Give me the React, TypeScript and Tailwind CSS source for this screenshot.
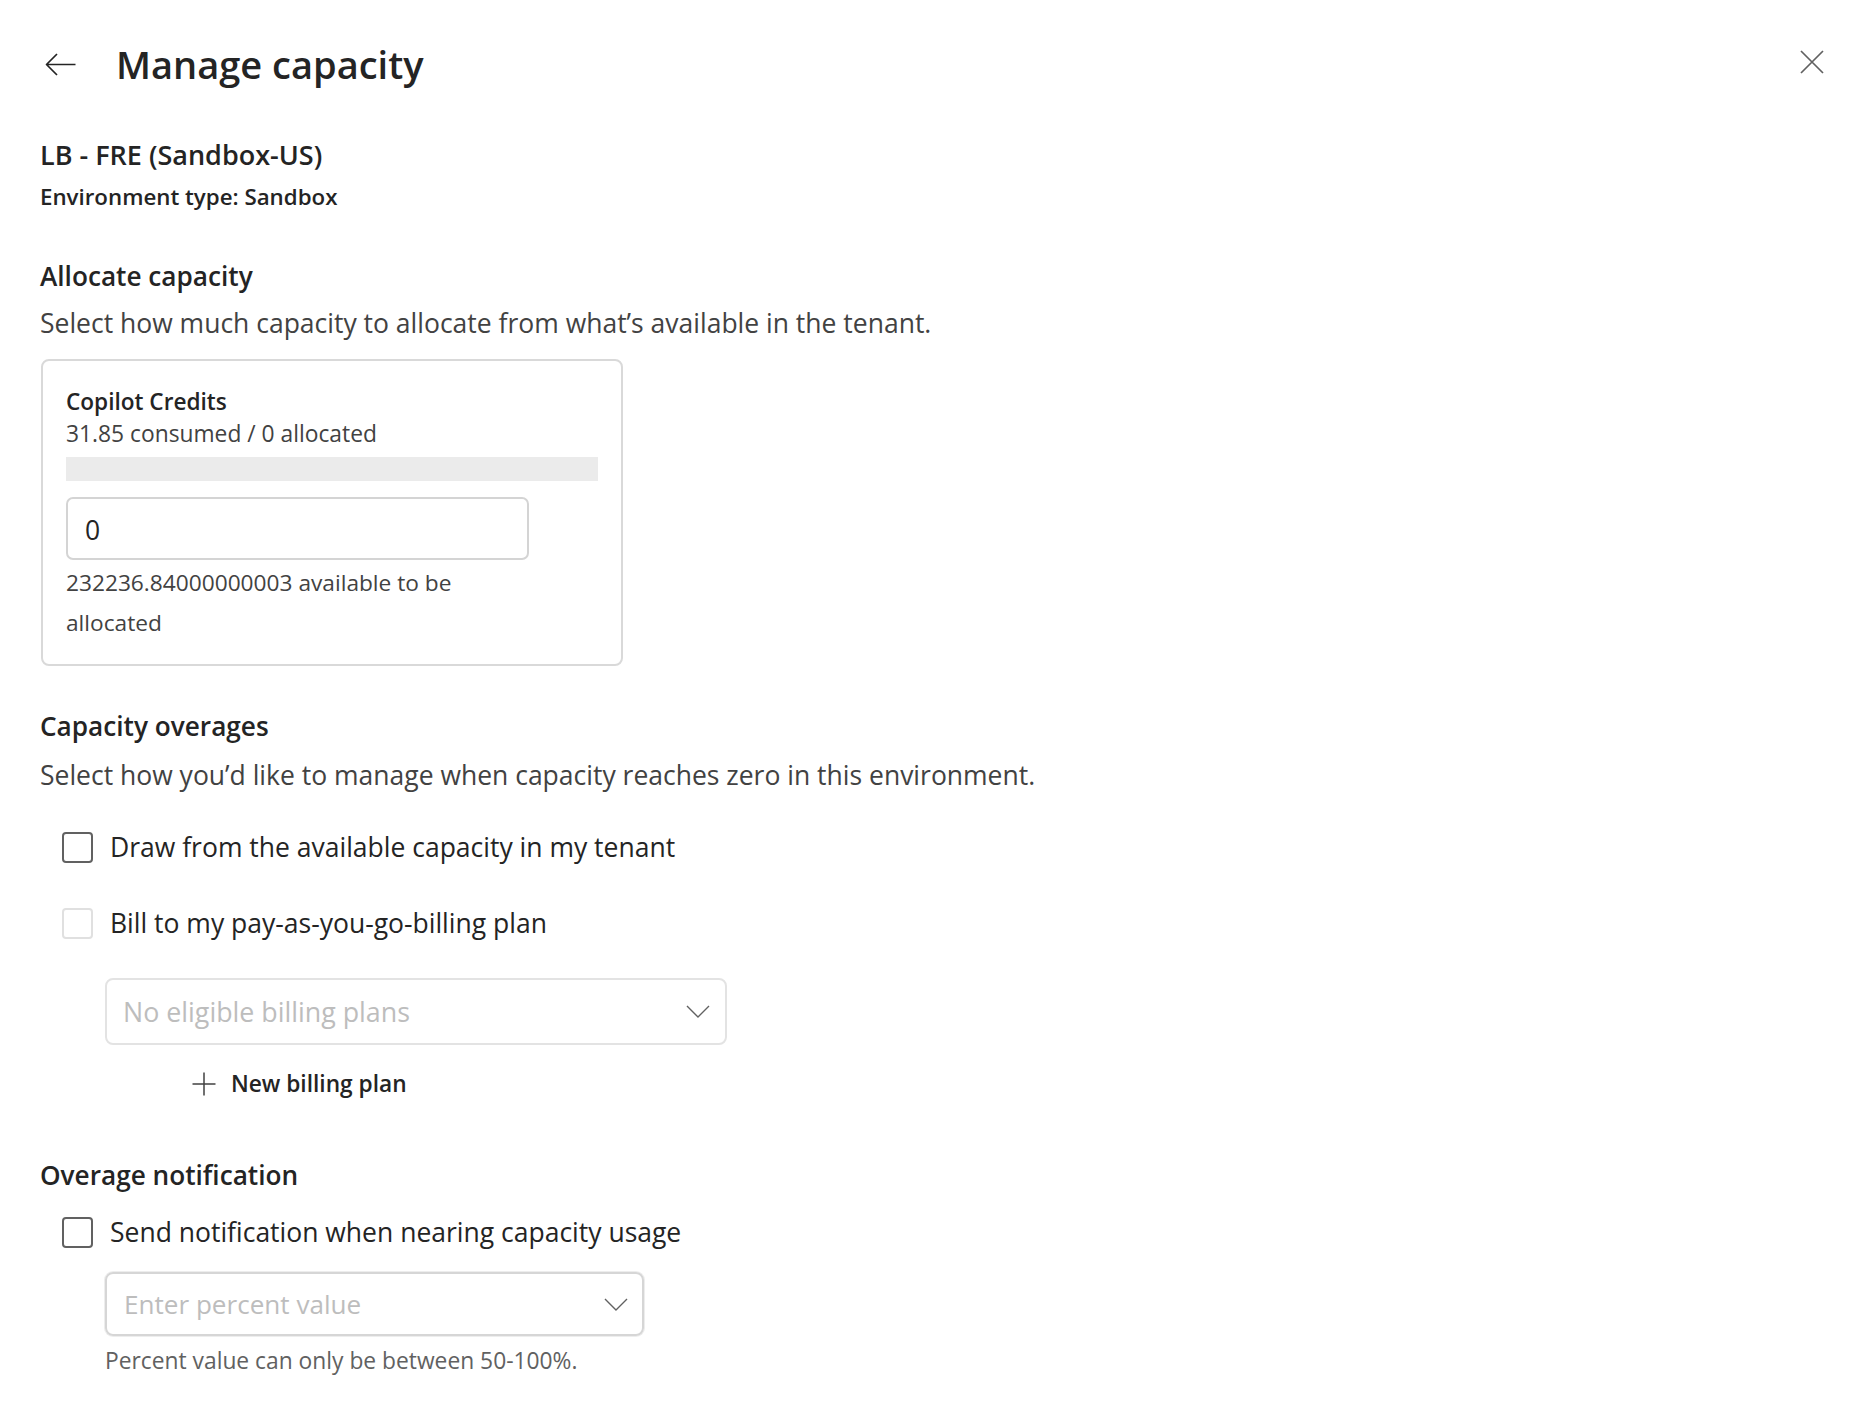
export default function App() {
  return (
    <div className="min-h-screen bg-white font-['Open_Sans',sans-serif] text-[#242424]">
      {/* header */}
      <header className="flex h-[88px] items-start justify-between pl-[45px] pr-[30px] pt-[40px]">
        <div className="flex h-[48px] items-center">
          <button className="flex h-[23px] w-[31px] items-center justify-center" aria-label="Back">
            <BackArrow />
          </button>
          <h1 className="ml-[40px] text-[38px] font-semibold leading-[48px]">Manage capacity</h1>
        </div>
        <button className="mt-[10px] flex h-[24px] w-[24px] items-center justify-center" aria-label="Close">
          <CloseIcon />
        </button>
      </header>

      <main className="flex flex-col items-start pl-[40px]">
        <div className="mt-[49px] text-[27px] font-semibold leading-[36px]">LB - FRE (Sandbox-US)</div>
        <div className="mt-[9px] text-[22.3px] font-semibold leading-[30px]">Environment type: Sandbox</div>

        {/* allocate capacity */}
        <h2 className="mt-[46px] text-[26.2px] font-semibold leading-[36px]">Allocate capacity</h2>
        <p className="mt-[11px] text-[26.5px] leading-[36px] text-[#424242]">
          Select how much capacity to allocate from what’s available in the tenant.
        </p>

        <div className="ml-px mt-[18px] w-[582px] rounded-[8px] border-2 border-[#d9d9d9] px-[23px] pb-[21px] pt-[25px]">
          <div className="text-[22.6px] font-semibold leading-[32px]">Copilot Credits</div>
          <div className="text-[22.8px] leading-[32px] text-[#424242]">31.85 consumed / 0 allocated</div>
          <div className="mt-[7px] h-[24px] w-full bg-[#ebebeb]" />
          <div className="w-[463px]">
            <div className="mt-[16px] flex h-[63px] items-center rounded-[7px] border-2 border-[#d4d4d4] pl-[17px] pt-[4px] text-[26.5px] text-[#242424]">
              0
            </div>
            <div className="mt-[3px] text-[22.7px] leading-[40px] text-[#424242]">
              232236.84000000003 available to be allocated
            </div>
          </div>
        </div>

        {/* capacity overages */}
        <h2 className="mt-[42px] text-[26.2px] font-semibold leading-[36px]">Capacity overages</h2>
        <p className="mt-[13px] text-[26.5px] leading-[36px] text-[#424242]">
          Select how you’d like to manage when capacity reaches zero in this environment.
        </p>

        <CheckRow className="mt-[30px]" label="Draw from the available capacity in my tenant" />
        <CheckRow className="mt-[28px]" label="Bill to my pay-as-you-go-billing plan" disabled />

        <div className="ml-[65px] mt-[31px] flex h-[67px] w-[622px] items-center justify-between rounded-[8px] border-2 border-[#e3e3e3] pl-[16px] pr-[15px]">
          <span className="text-[26.8px] leading-[36px] text-[#bdbdbd]">No eligible billing plans</span>
          <Chevron />
        </div>

        <button className="ml-[152px] mt-[19px] flex h-[40px] items-center">
          <PlusIcon />
          <span className="ml-[15px] text-[22.7px] font-semibold leading-[30px] text-[#242424]">New billing plan</span>
        </button>

        {/* overage notification */}
        <h2 className="mt-[53px] text-[26.2px] font-semibold leading-[36px]">Overage notification</h2>
        <CheckRow className="mt-[15px]" label="Send notification when nearing capacity usage" />

        <div className="ml-[65px] mt-[16px] flex h-[64px] w-[539px] items-center justify-between rounded-[8px] border-2 border-[#d6d6d6] pl-[17px] pr-[14px] ring-1 ring-[#ededed]">
          <span className="text-[26.1px] leading-[36px] text-[#bdbdbd]">Enter percent value</span>
          <Chevron />
        </div>
        <div className="ml-[65px] mt-[10px] text-[22.8px] leading-[30px] text-[#616161]">
          Percent value can only be between 50-100%.
        </div>
      </main>
    </div>
  );
}

function CheckRow({ label, disabled, className }: { label: string; disabled?: boolean; className?: string }) {
  return (
    <label className={`ml-[22px] flex h-[48px] items-center ${className ?? ""}`}>
      <span
        className={`h-[31px] w-[31px] shrink-0 rounded-[4px] border-2 ${
          disabled ? "border-[#e0e0e0]" : "border-[#616161]"
        }`}
      />
      <span className="ml-[17px] text-[26.5px] leading-[36px] text-[#242424]">{label}</span>
    </label>
  );
}

function BackArrow() {
  return (
    <svg width="31" height="23" viewBox="0 0 31 23" fill="none" aria-hidden="true">
      <path d="M1.5 11.5H30.5M12 1L1.5 11.5L12 22" stroke="#242424" strokeWidth="1.7" strokeLinejoin="round" />
    </svg>
  );
}

function CloseIcon() {
  return (
    <svg width="24" height="24" viewBox="0 0 24 24" fill="none" aria-hidden="true">
      <path d="M1 1L23 23M23 1L1 23" stroke="#616161" strokeWidth="1.7" />
    </svg>
  );
}

function Chevron() {
  return (
    <svg width="24" height="13" viewBox="0 0 24 13" fill="none" aria-hidden="true">
      <path d="M1 1L12 12L23 1" stroke="#616161" strokeWidth="1.4" />
    </svg>
  );
}

function PlusIcon() {
  return (
    <svg width="24" height="24" viewBox="0 0 24 24" fill="none" aria-hidden="true">
      <path d="M12 0.5V23.5M0.5 12H23.5" stroke="#424242" strokeWidth="1.5" />
    </svg>
  );
}
